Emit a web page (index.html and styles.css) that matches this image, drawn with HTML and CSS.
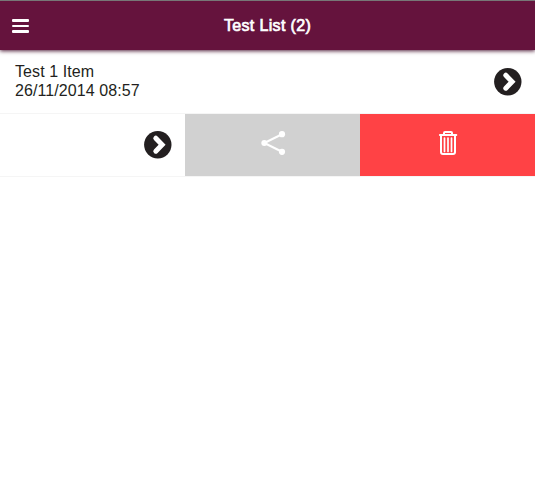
FILE: index.html
```html
<!DOCTYPE html>
<html lang="en">
<head>
<meta charset="utf-8">
<title>Test List</title>
<link rel="stylesheet" href="styles.css">
</head>
<body>
<header class="bar">
  <button class="menu" aria-label="Menu"><span></span><span></span><span></span></button>
  <h1 class="title">Test List (2)</h1>
</header>
<main class="list">
  <div class="row">
    <div class="item">
      <p class="label">Test 1 Item<br>26/11/2014 08:57</p>
      <svg class="arrow" viewBox="0 0 28 28"><circle cx="13.8" cy="13.7" r="13.7" fill="#231f20"/><path d="M11.8 7.2 18.1 13.7 11.8 20.2" fill="none" stroke="#fff" stroke-width="5" stroke-linecap="round"/></svg>
    </div>
  </div>
  <div class="row">
    <div class="item swiped">
      <svg class="arrow" viewBox="0 0 28 28"><circle cx="13.8" cy="13.7" r="13.7" fill="#231f20"/><path d="M11.8 7.2 18.1 13.7 11.8 20.2" fill="none" stroke="#fff" stroke-width="5" stroke-linecap="round"/></svg>
    </div>
    <button class="action share" aria-label="Share">
      <svg class="icon" viewBox="0 0 26 26"><path d="M22 4.2 4.3 13 22 21.8" fill="none" stroke="#fff" stroke-width="2.1"/><g fill="#fff"><circle cx="4.3" cy="13" r="3"/><circle cx="22" cy="4.2" r="3.1"/><circle cx="22" cy="21.8" r="3.1"/></g></svg>
    </button>
    <button class="action delete" aria-label="Delete">
      <svg class="icon" viewBox="0 0 26 26"><g fill="none" stroke="#fff" stroke-width="2" stroke-linecap="round" stroke-linejoin="round"><path d="M4.9 5H21.3M9 4.6V3Q9 2 10 2H16Q17 2 17 3V4.6M6 5.5V22Q6 24 8 24H18Q20 24 20 22V5.5"/><path d="M9.5 8V21.5M13 8V21.5M16.5 8V21.5" stroke-width="1.7"/></g></svg>
    </button>
  </div>
</main>
</body>
</html>
```
FILE: styles.css
```css
* { box-sizing: border-box; }
body {
  margin: 0;
  background: #fff;
  color: #231f20;
  font: 16px/19px "Liberation Sans", Arial, sans-serif;
}
button { border: 0; padding: 0; }
.bar {
  display: grid;
  grid-template-columns: 40px 1fr 40px;
  align-items: center;
  height: 50px;
  border-top: 1px solid #777;
  background: #65133d;
  box-shadow: 0 1px 4px rgba(60, 5, 35, .9);
}
.menu {
  display: flex;
  flex-direction: column;
  justify-content: space-between;
  width: 17px;
  height: 14px;
  margin: 1px 0 0 12px;
  background: none;
}
.menu span { height: 2.8px; border-radius: 1px; background: #fff; }
.title {
  margin: 0;
  color: #fff;
  font-size: 16px;
  font-weight: 400;
  letter-spacing: .34px;
  -webkit-text-stroke: .7px #fff;
  text-align: center;
}
.list { padding-top: 1px; }
.row { display: flex; height: 63px; border-bottom: 1px solid #f5f5f5; }
.item {
  display: flex;
  flex: 1;
  align-items: center;
  justify-content: space-between;
  padding: 0 13px 0 15px;
}
.swiped { justify-content: flex-end; }
.label { margin: 0; padding-bottom: 2px; letter-spacing: .09px; }
.arrow { width: 28px; height: 28px; }
.action {
  display: flex;
  align-items: center;
  justify-content: center;
  width: 175px;
  padding-bottom: 4px;
}
.share { background: #d1d1d1; }
.delete { background: #ff4245; }
.icon { width: 26px; height: 26px; }
```
